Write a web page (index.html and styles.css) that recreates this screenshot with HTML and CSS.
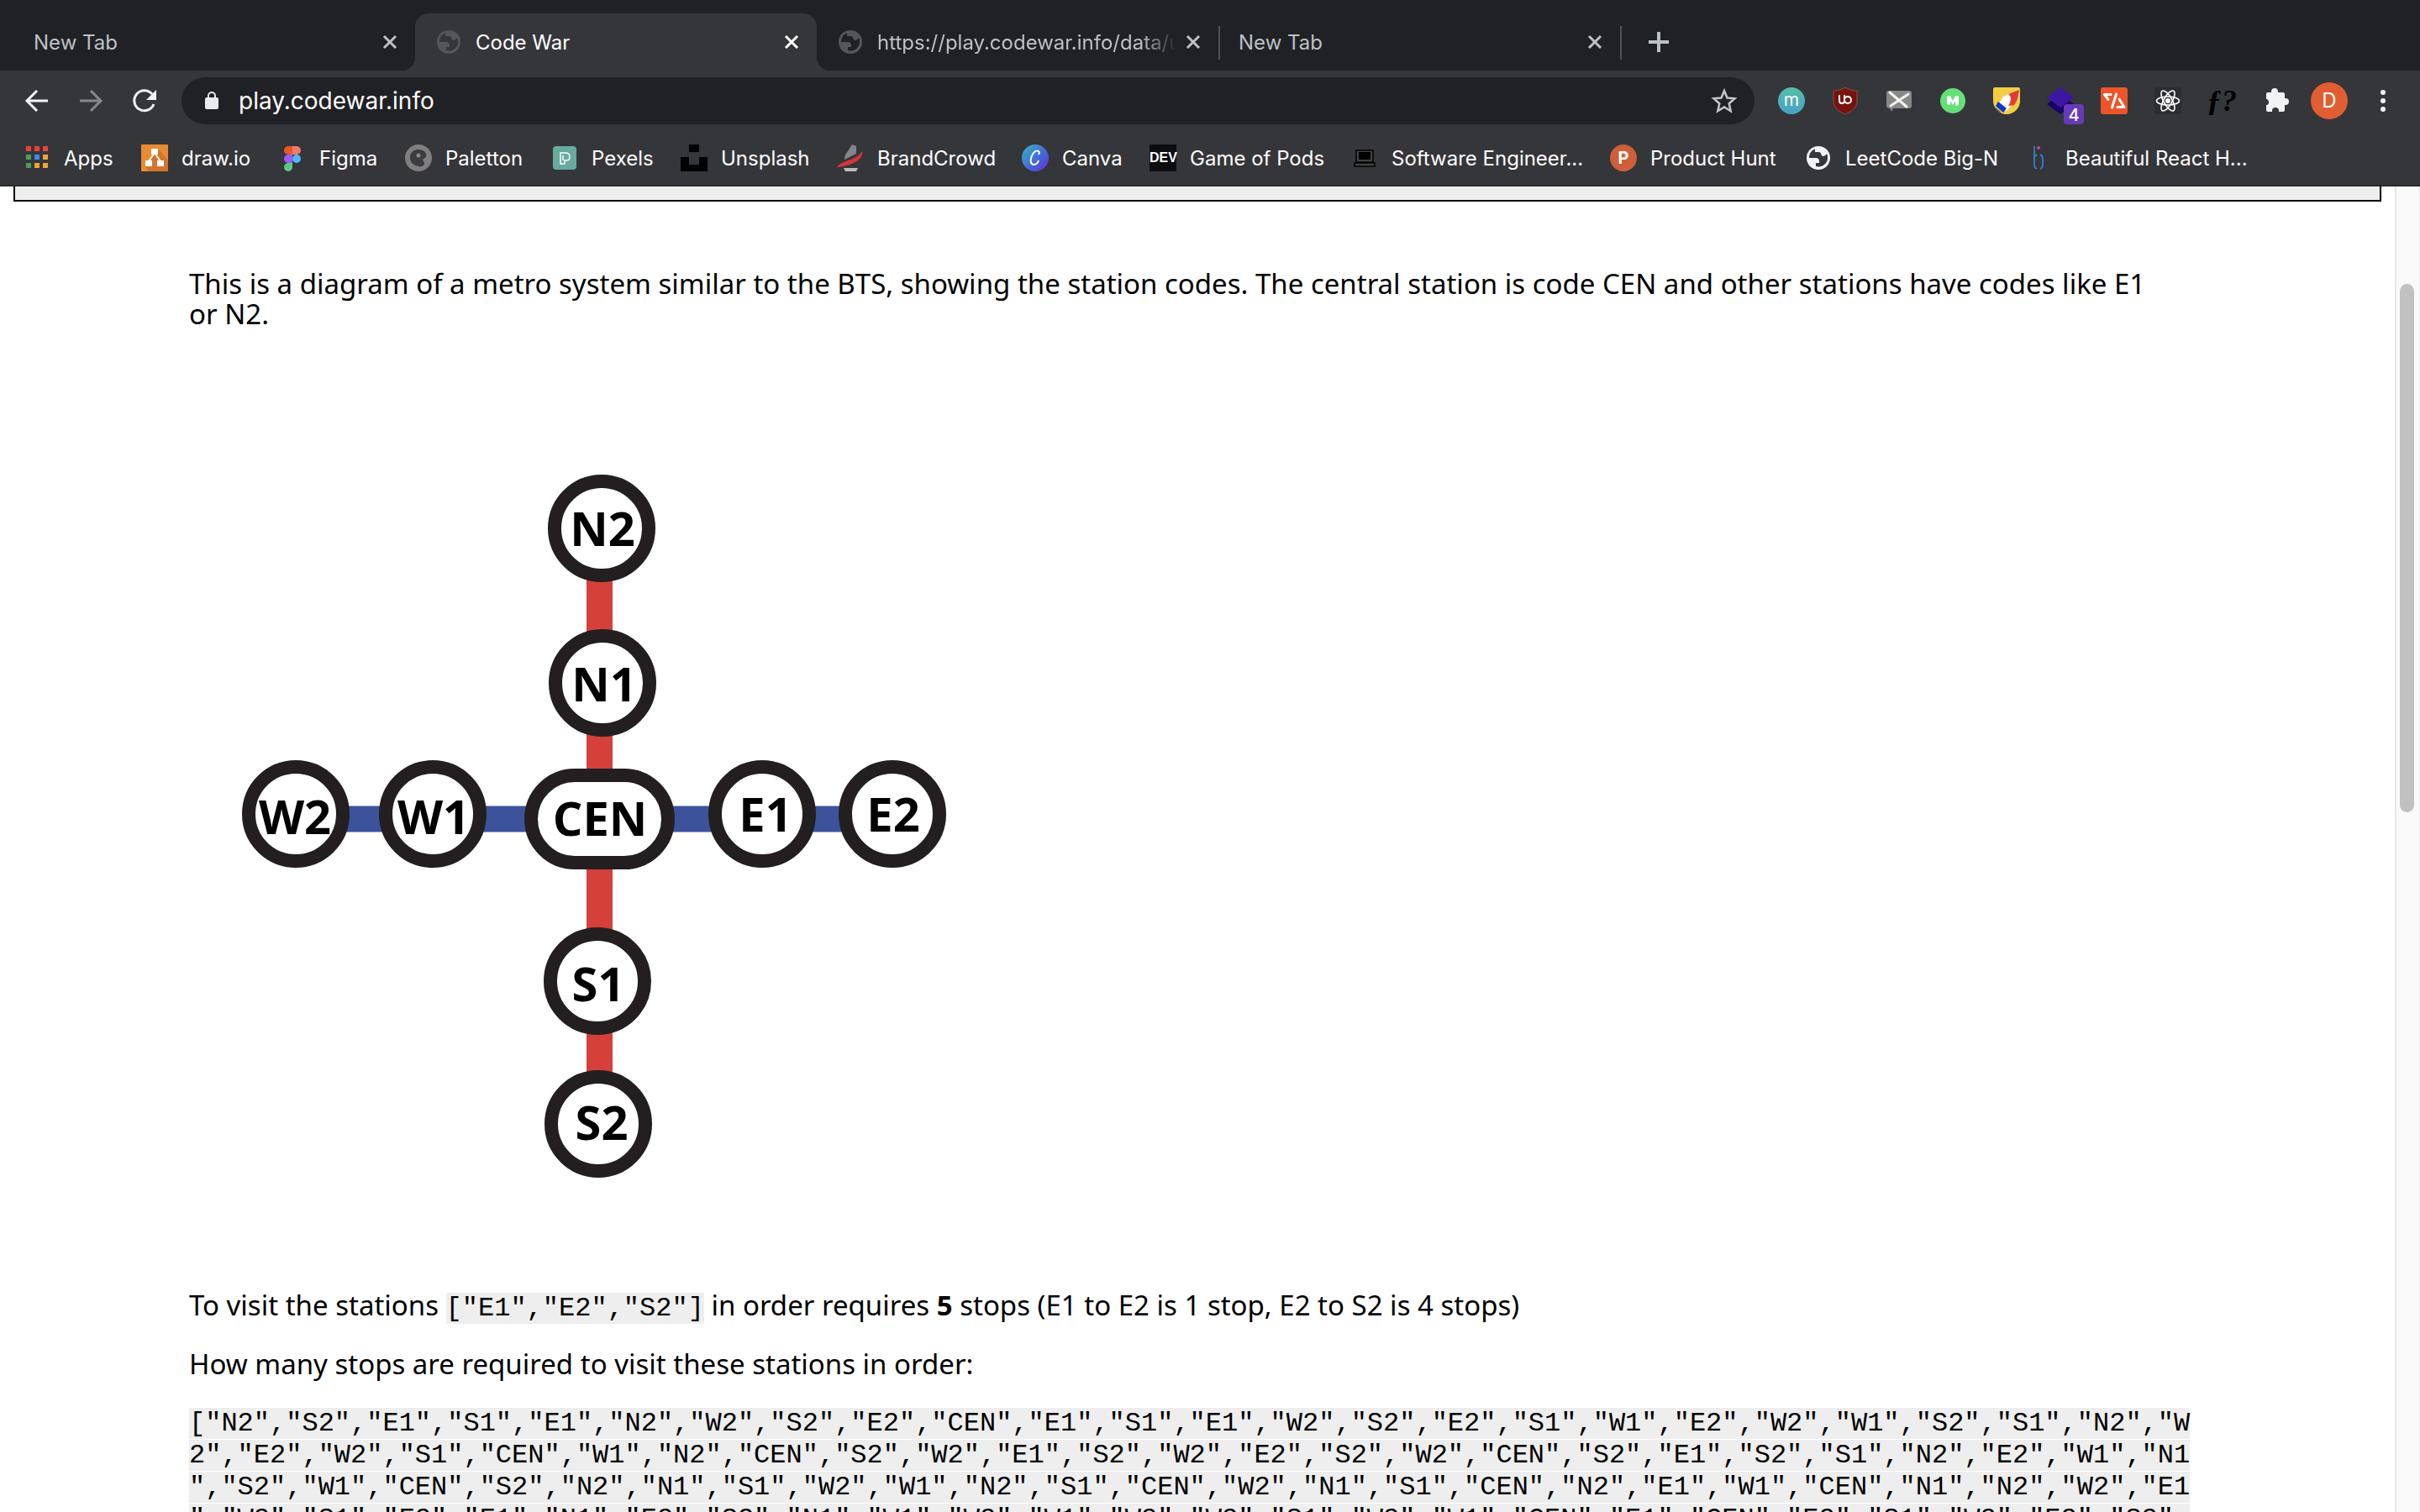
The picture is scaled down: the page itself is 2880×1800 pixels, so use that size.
FILE: index.html
```html
<!DOCTYPE html>
<html lang="en">
<head>
<meta charset="utf-8">
<title>Code War</title>
<link rel="stylesheet" href="styles.css">
</head>
<body>
<svg class="defs" aria-hidden="true">
  <symbol id="close" viewBox="0 0 20 20"><path d="M3 3l14 14M17 3L3 17" stroke="currentColor" stroke-width="3" fill="none"/></symbol>
  <symbol id="globe" viewBox="0 0 28 28"><circle cx="14" cy="14" r="14" fill="currentColor"/><path d="M10 3.500C5 5 3 10 3 14h8c3 0 4 2 4 4v2h-4v4c7 2 14-3 14-10 0-2 0-4-1-5-1 2-3 3-5 3-2-1-1-4-4-5h-5z" fill="var(--hole)"/></symbol>
</svg>
<header class="browser">
  <nav class="tabs" aria-label="Tabs">
    <div class="tab"><span class="tab-title">New Tab</span><button class="tab-close" aria-label="Close tab"><svg><use href="#close"/></svg></button></div>
    <div class="tab with-icon active"><svg class="favicon"><use href="#globe"/></svg><span class="tab-title">Code War</span><button class="tab-close" aria-label="Close tab"><svg><use href="#close"/></svg></button></div>
    <div class="tab with-icon divided"><svg class="favicon"><use href="#globe"/></svg><span class="tab-title faded">https://play.codewar.info/data/u</span><button class="tab-close" aria-label="Close tab"><svg><use href="#close"/></svg></button></div>
    <div class="tab divided"><span class="tab-title">New Tab</span><button class="tab-close" aria-label="Close tab"><svg><use href="#close"/></svg></button></div>
    <button class="new-tab" aria-label="New tab"><svg viewBox="0 0 24 24"><path d="M12 0v24M0 12h24" stroke="#bdc1c6" stroke-width="4"/></svg></button>
  </nav>
  <div class="toolbar">
    <button class="tool" aria-label="Back"><svg viewBox="0 0 32 32"><path d="M29 16H5M16 4L4 16l12 12" fill="none" stroke="#f1f3f4" stroke-width="3"/></svg></button>
    <button class="tool" aria-label="Forward"><svg viewBox="0 0 32 32"><path d="M3 16h24M16 4l12 12-12 12" fill="none" stroke="#87888a" stroke-width="3"/></svg></button>
    <button class="tool" aria-label="Reload"><svg viewBox="0 0 32 32"><path d="M27 20a12 12 0 1 1-2-12" fill="none" stroke="#f1f3f4" stroke-width="3"/><path d="M30 3v12H18z" fill="#f1f3f4"/></svg></button>
    <div class="omnibox">
      <svg class="lock" viewBox="0 0 16 22"><path d="M4 9V5a4 4 0 0 1 8 0v4" fill="none" stroke="#e8eaed" stroke-width="2"/><rect y="7" width="16" height="14" rx="2" fill="#e8eaed"/></svg>
      <input class="address" type="text" value="play.codewar.info" aria-label="Address">
      <button class="star" aria-label="Bookmark this page"><svg viewBox="0 0 32 32"><path d="M16 4l3.500 8.500 9 .8-6.800 6 2 8.900L16 23.500l-7.700 4.700 2-8.900-6.800-6 9-.8z" fill="none" stroke="#c4c6c9" stroke-width="2.500"/></svg></button>
    </div>
    <div class="extensions">
      <button class="tool" aria-label="m"><svg viewBox="0 0 32 32"><defs><linearGradient id="teal" x1="0" y1="0" x2="0" y2="1"><stop offset="0" stop-color="#56bda4"/><stop offset="1" stop-color="#46a2c8"/></linearGradient></defs><circle cx="16" cy="16" r="16" fill="url(#teal)"/><text x="16" y="22" font-size="21" text-anchor="middle" fill="#fff">m</text></svg></button>
      <button class="tool" aria-label="uBlock"><svg viewBox="0 0 32 32"><path d="M16 0c4 3 9 4 14 4v13c0 7-7 12-14 15C9 29 2 24 2 17V4c5 0 10-1 14-4z" fill="#77130c" stroke="#8d4b47"/><path d="M9 9v7a3 3 0 0 0 6 0V9M15 15a4 4 0 1 0 4-4 4 4 0 0 0-4 4" fill="none" stroke="#fff" stroke-width="2"/></svg></button>
      <button class="tool" aria-label="Comments"><svg viewBox="0 0 32 32"><path d="M4 4h24q3 0 3 3v15q0 3-3 3H9l-2 4-2-4q-4 0-4-3V7q0-3 3-3z" fill="#888"/><path d="M5 6l20 17M27 8L6 22" stroke="#f4f4f4" stroke-width="3" stroke-linecap="round"/></svg></button>
      <button class="tool" aria-label="Medium"><svg viewBox="0 0 32 32"><circle cx="16" cy="16" r="15" fill="#66df78"/><path d="M9 11l4-1 3 6 3-6 4 1v10l-4 1v-6l-3 5-3-5v5l-4-1z" fill="#fff"/></svg></button>
      <button class="tool" aria-label="Rocket"><svg viewBox="0 0 32 32"><path d="M2 0h28q2 0 2 2v14a16 16 0 0 1-32 0V2q0-2 2-2z" fill="#f3cd46"/><path d="M20 7L12 11l-6 10 9 7c6-4 8-8 7-14z" fill="#fff"/><path d="M31 3L18 8c4 3 4 7 0 14l7-1c4-5 5-11 6-18z" fill="#e23b36"/><path d="M6 17l10 8-4 5L3 22z" fill="#0c35c8"/><path d="M2 23l8 7c-4-1-7-4-8-7z" fill="#445566"/></svg></button>
      <button class="tool" aria-label="Layers"><svg viewBox="0 0 32 32"><path d="M0 20L16 8l16 12-16 12z" fill="#170468"/><path d="M0 12L16 0l16 12-16 12z" fill="#3d16a3"/></svg><span class="badge">4</span></button>
      <button class="tool" aria-label="Slash"><svg viewBox="0 0 32 32"><rect width="32" height="32" rx="3" fill="#ee5428"/><path d="M12 8.500H4.500l4.500 6M18.500 8l-5 16M22 14l6 9.500h-8" fill="none" stroke="#fff" stroke-width="3" stroke-linecap="round" stroke-linejoin="round"/></svg></button>
      <button class="tool" aria-label="React"><svg viewBox="0 0 32 32"><rect width="32" height="32" rx="3" fill="#2c2d31"/><g fill="none" stroke="#fff" stroke-width="1.600"><ellipse cx="16" cy="16" rx="13.500" ry="5"/><ellipse cx="16" cy="16" rx="13.500" ry="5" transform="rotate(60 16 16)"/><ellipse cx="16" cy="16" rx="13.500" ry="5" transform="rotate(120 16 16)"/></g><circle cx="16" cy="16" r="3" fill="#fff"/></svg></button>
      <button class="tool formula" aria-label="WhatFont">ƒ?</button>
      <button class="tool" aria-label="Extensions"><svg viewBox="0 0 32 32"><path d="M11 6V5a4 4 0 0 1 8 0v1h6q2 0 2 2v5h1a4 4 0 0 1 0 8h-1v6q0 2-2 2h-5v-1a4 4 0 0 0-8 0v1H7q-2 0-2-2v-6h1a4 4 0 0 0 0-7H5V8q0-2 2-2z" fill="#f1f3f4"/></svg></button>
      <button class="tool" aria-label="Profile"><span class="avatar">D</span></button>
      <button class="tool" aria-label="Menu"><svg viewBox="0 0 32 32" fill="#f1f3f4"><circle cx="16" cy="6" r="3"/><circle cx="16" cy="16" r="3"/><circle cx="16" cy="26" r="3"/></svg></button>
    </div>
  </div>
  <nav class="bookmarks" aria-label="Bookmarks">
    <a href="#"><svg viewBox="0 0 32 32"><g fill="#ea4335"><path d="M3 2h6v6H3zM13 2h6v6h-6zM23 2h6v6h-6z"/></g><path d="M3 12h6v6H3zM3 22h6v6H3z" fill="#4c9f54"/><path d="M13 12h6v6h-6z" fill="#4285f4"/><path d="M23 12h6v6h-6zM13 22h6v6h-6zM23 22h6v6h-6z" fill="#f0a430"/></svg>Apps</a>
    <a href="#"><svg viewBox="0 0 32 32"><rect width="32" height="32" rx="1" fill="#e58c35"/><path d="M20 5l12 14v13H9l-4-6z" fill="#d3752c"/><path d="M16 10L9 20M16 10l7 10" stroke="#fff" stroke-width="2"/><path d="M12 5h8v7h-8zM5 19h8v7H5zM19 19h8v7h-8z" fill="#fff"/></svg>draw.io</a>
    <a href="#"><svg viewBox="0 0 32 32"><path d="M16 2h-5a5 5 0 0 0 0 10h5z" fill="#e8582b"/><path d="M16 2h5a5 5 0 0 1 0 10h-5z" fill="#ee7c6c"/><path d="M16 12h-5a5 5 0 0 0 0 10h5z" fill="#9b5df6"/><circle cx="21" cy="17" r="5" fill="#53b6f8"/><path d="M16 22h-5a5 5 0 1 0 5 5z" fill="#5bc886"/></svg>Figma</a>
    <a href="#"><svg viewBox="0 0 32 32"><circle cx="16" cy="16" r="16" fill="#7f7f7f"/><path d="M16 6c6 0 11 4 9 9l-4 3 2 4c0 4-4 5-7 4C8 24 6 20 6 15s4-9 10-9z" fill="#3c3c3e"/><circle cx="16" cy="13" r="2.500" fill="#8a8a8a"/></svg>Paletton</a>
    <a href="#"><svg viewBox="0 0 32 32"><rect x="2" y="2" width="28" height="28" rx="4" fill="#68aaa0"/><path d="M11 23V10h6q5 0 5 4.500t-4 4.500h-2v4zM14 19v-6" fill="none" stroke="#fff" stroke-width="1.500"/></svg>Pexels</a>
    <a href="#"><svg viewBox="0 0 32 32"><path d="M10 0h12v9H10zM0 15h10v9h12v-9h10v17H0z"/></svg>Unsplash</a>
    <a href="#"><svg viewBox="0 0 32 32"><path d="M18 0l5 2v9L9 18c0-4 1-7 4-10z" fill="#83858b"/><path d="M30 8c2 9-10 17-30 19 4-8 22-7 30-19z" fill="#d43539"/><path d="M8 28h17l-2 4H10z" fill="#bbb"/></svg>BrandCrowd</a>
    <a href="#"><svg viewBox="0 0 32 32"><defs><linearGradient id="canva" x1="0" y1="0" x2="1" y2="1"><stop offset=".1" stop-color="#3aa9c9"/><stop offset=".6" stop-color="#4563d8"/><stop offset="1" stop-color="#6a2bd8"/></linearGradient></defs><circle cx="16" cy="16" r="16" fill="url(#canva)"/><path d="M20 12c3-5-3-6-6-2-4 5-5 13 0 14 3 0 5-2 6-5" fill="none" stroke="#fff" stroke-width="2"/></svg>Canva</a>
    <a href="#"><span class="dev">DEV</span>Game of Pods</a>
    <a href="#"><svg viewBox="0 0 32 32"><path d="M6 7h20v14H6zM4 22h24v4H4z" fill="#424245" stroke="#000" stroke-width="1.500"/><path d="M9 9h14v9H9z"/></svg>Software Engineer...</a>
    <a href="#"><span class="hunt">P</span>Product Hunt</a>
    <a href="#"><svg class="leet" viewBox="-2 -2 32 32"><use href="#globe" width="28" height="28"/></svg>LeetCode Big-N</a>
    <a href="#"><svg viewBox="0 0 32 32"><path d="M11 2v22q0 4 3 5M18 29q3-1 3-5v-7q0-4-3-5M14 12q-2 1-3 4" fill="none" stroke="#3178c0" stroke-width="2"/><circle cx="16" cy="4" r="2" fill="#c542a5"/></svg>Beautiful React H...</a>
  </nav>
</header>
<div class="viewport">
  <main class="page">
    <div class="panel"></div>
    <article class="content">
      <p>This is a diagram of a metro system similar to the BTS, showing the station codes. The central station is code CEN and other stations have codes like E1<br>or N2.</p>
      <svg class="metro" viewBox="225 520 920 940" role="img" aria-label="Metro map">
        <path d="M713.500 629v709" stroke="#d5403b" stroke-width="31"/>
        <path d="M352 975h710" stroke="#3c539b" stroke-width="31"/>
        <g fill="#fff" stroke="#231f20" stroke-width="16">
          <circle cx="716" cy="629" r="56"/><circle cx="717" cy="813" r="56"/>
          <circle cx="352" cy="969" r="56"/><circle cx="515" cy="969" r="56"/>
          <rect x="632" y="923" width="163" height="104" rx="52"/>
          <circle cx="907" cy="969" r="56"/><circle cx="1062" cy="969" r="56"/>
          <circle cx="711" cy="1168" r="56"/><circle cx="712" cy="1338" r="56"/>
        </g>
        <g class="stations">
          <text x="717" y="650">N2</text><text x="719" y="835">N1</text>
          <text x="351" y="993">W2</text><text x="516" y="993">W1</text>
          <text x="714" y="995">CEN</text>
          <text x="911" y="990">E1</text><text x="1063" y="990">E2</text>
          <text x="712" y="1192">S1</text><text x="716" y="1357">S2</text>
        </g>
      </svg>
      <p>To visit the stations <code>["E1","E2","S2"]</code> in order requires <b>5</b> stops (E1 to E2 is 1 stop, E2 to S2 is 4 stops)</p>
      <p>How many stops are required to visit these stations in order:</p>
      <p class="route"><code>["N2","S2","E1","S1","E1","N2","W2","S2","E2","CEN","E1","S1","E1","W2","S2","E2","S1","W1","E2","W2","W1","S2","S1","N2","W2","E2","W2","S1","CEN","W1","N2","CEN","S2","W2","E1","S2","W2","E2","S2","W2","CEN","S2","E1","S2","S1","N2","E2","W1","N1","S2","W1","CEN","S2","N2","N1","S1","W2","W1","N2","S1","CEN","W2","N1","S1","CEN","N2","E1","W1","CEN","N1","N2","W2","E1","W2","S1","E2","E1","N1","E2","S2","N1","W1","W2","W1","W2","W2","S1","W2","W1","CEN","E1","CEN","E2","S1","W2","E2","S2",</code></p>
    </article>
  </main>
  <div class="scrollbar"><div class="thumb"></div></div>
</div>
</body>
</html>
```
FILE: styles.css
```css
* { box-sizing: border-box; }
body {
  margin: 0;
  height: 100vh;
  display: flex;
  flex-direction: column;
  overflow: hidden;
  background: #fff;
  color: #000;
  font-family: "Noto Sans", sans-serif;
}
button { border: 0; padding: 0; background: none; color: inherit; font: inherit; }
svg { display: block; }
.defs { position: absolute; width: 0; height: 0; }

.browser {
  flex: none;
  background: #35363a;
  border-bottom: 2px solid #28292c;
  color: #fff;
  font-family: Inter, sans-serif;
  font-size: 24px;
}
.tabs {
  display: flex;
  height: 84px;
  padding: 16px 16px 0;
  background: #202124;
  color: #bdc1c6;
}
.tab {
  --hole: #202124;
  position: relative;
  flex: none;
  width: 478px;
  display: flex;
  align-items: center;
  gap: 18px;
  padding: 0 20px 0 24px;
}
.tab.with-icon { padding-left: 26px; }
.tab.active { --hole: #35363a; background: #35363a; color: #fff; border-radius: 16px 16px 0 0; }
.tab.active::before, .tab.active::after {
  content: "";
  position: absolute;
  bottom: 0;
  width: 16px;
  height: 16px;
}
.tab.active::before { left: -16px; background: radial-gradient(circle at 0 0, transparent 16px, #35363a 16px); }
.tab.active::after { right: -16px; background: radial-gradient(circle at 100% 0, transparent 16px, #35363a 16px); }
.tab.divided::after {
  content: "";
  position: absolute;
  right: -2px;
  top: 15px;
  width: 2px;
  height: 40px;
  background: #505154;
}
.favicon { flex: none; width: 28px; height: 28px; color: #55565a; }
.tab-title { flex: 1; overflow: hidden; white-space: nowrap; }
.faded { -webkit-mask-image: linear-gradient(90deg, #000 88%, transparent); mask-image: linear-gradient(90deg, #000 88%, transparent); }
.tab-close { width: 20px; height: 20px; flex: none; }
.tab-close svg { width: 20px; height: 20px; }
.tab .faded { margin-right: -8px; }
.new-tab { width: 24px; margin-left: 34px; }

.toolbar { display: flex; align-items: center; height: 72px; padding: 0 12px; }
.tool { position: relative; flex: none; width: 64px; height: 56px; display: flex; align-items: center; justify-content: center; }
.tool svg { width: 32px; height: 32px; }
.omnibox {
  flex: 1;
  display: flex;
  align-items: center;
  height: 56px;
  margin: 0 12px;
  padding: 0 20px 0 28px;
  border-radius: 28px;
  background: #202124;
}
.lock { width: 16px; height: 22px; }
.address { flex: 1; margin: 0 0 0 24px; padding: 0; border: 0; background: none; color: #fff; font: 28px Inter, sans-serif; }
.star svg { width: 32px; height: 32px; }
.extensions { display: flex; }
.badge {
  position: absolute;
  right: 4px;
  bottom: 0;
  width: 24px;
  height: 24px;
  border-radius: 4px;
  background: #673ab7;
  font-size: 20px;
  line-height: 26px;
  font-weight: 500;
}
.avatar { width: 44px; height: 44px; border-radius: 50%; background: #e15d32; line-height: 44px; }
.tool.formula { color: #000; font: italic bold 36px "Liberation Serif", serif; }
.bookmarks {
  display: grid;
  grid-template-columns: 140px 164px 150px 174px 154px 186px 220px 152px 240px 308px 232px 262px auto;
  align-items: center;
  height: 64px;
  padding-left: 28px;
}
.bookmarks a { display: flex; align-items: center; gap: 16px; color: inherit; text-decoration: none; white-space: nowrap; }
.bookmarks svg { width: 32px; height: 32px; }
.leet { --hole: #35363a; color: #f1f3f4; }
.dev { width: 32px; height: 32px; background: #0c0d0f; font: bold 16px/32px "Liberation Sans Narrow", "Liberation Sans", sans-serif; text-align: center; }
.hunt { width: 32px; height: 32px; border-radius: 50%; background: #ce5f3a; font-weight: 700; font-size: 20px; line-height: 32px; text-align: center; }

.viewport { flex: 1; min-height: 0; display: flex; }
.page { flex: 1; min-width: 0; overflow: hidden; padding: 0 16px; }
.panel { height: 18px; background: #eee; border: 2px solid #000; border-top: 0; }
.content { max-width: 2400px; margin: 80px auto 0; font-size: 33px; line-height: 36px; }
.content p { margin: 0 0 34px; }
.metro { width: 920px; height: 940px; margin: 128px 0 76px; }
.content p:first-child { margin-bottom: 0; }
.stations { font: 700 56px "Open Sans", sans-serif; text-anchor: middle; fill: #000; }
code { background: #eee; font: 32px/0 "Liberation Mono", monospace; }
.content .route { font: 32px/38px "Liberation Mono", monospace; line-break: anywhere; }
.route code { line-height: inherit; }
.scrollbar { flex: none; width: 30px; padding: 116px 6px 0 4px; background: #fafafa; border-left: 2px solid #e8e8e8; border-right: 1px solid #ededed; }
.thumb { height: 43%; border-radius: 9px; background: #c1c1c1; }
```
